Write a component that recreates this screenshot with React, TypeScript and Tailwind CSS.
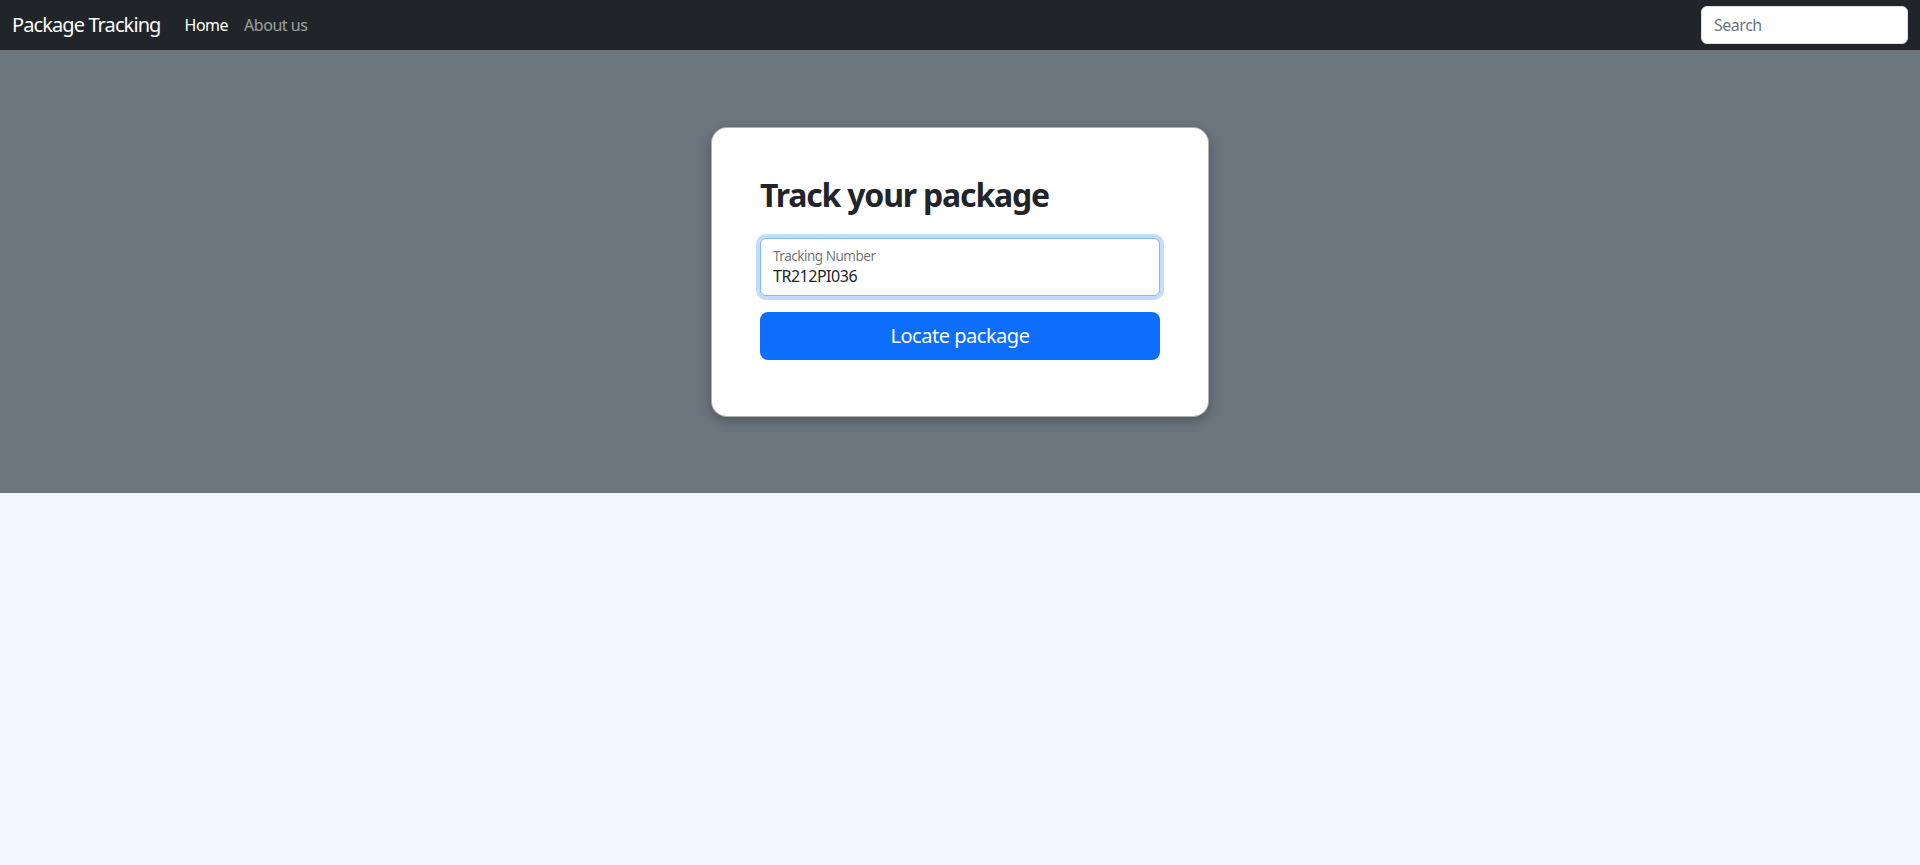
export default function App() {
    return (
        <div className="flex min-h-[865px] flex-col bg-[#eff6ff] font-['Segoe_UI','Noto_Sans',sans-serif] tracking-[-0.03em]">
            <nav className="flex h-[50px] items-center justify-between bg-[#212529] pl-3 pr-3">
                <div className="flex items-center">
                    <a className="mr-4 text-[20px] leading-[30px] tracking-[-0.045em] text-white">Package Tracking</a>
                    <a className="px-2 text-[16px] text-white">Home</a>
                    <a className="px-2 text-[16px] text-white/55">About us</a>
                </div>
                <input
                    className="h-[38px] w-[207px] rounded-md border border-[#dee2e6] bg-white px-3 text-[16px] text-[#212529] outline-none placeholder:text-[#6c757d]"
                    placeholder="Search"
                />
            </nav>
            <section className="flex h-[443px] items-center justify-center bg-[#6c757d]">
                <div className="w-[498px] rounded-2xl border border-black/30 bg-white px-12 pb-[56px] pt-12 shadow-[0_4px_12px_rgba(0,0,0,0.25)]">
                    <h2 className="mb-6 text-[32px] font-bold leading-[38px] tracking-[-0.037em] text-[#212529]">Track your package</h2>
                    <div className="mb-4 flex h-[58px] flex-col justify-center rounded-md border border-[#86b7fe] bg-white px-3 shadow-[0_0_0_4px_rgba(13,110,253,0.25)]">
                        <span className="text-[13.5px] leading-[18px] text-[#212529]/65">Tracking Number</span>
                        <span className="text-[16px] leading-[22px] text-[#212529]">TR212PI036</span>
                    </div>
                    <button className="h-[48px] w-full rounded-lg bg-[#0d6efd] text-[20px] text-white">Locate package</button>
                </div>
            </section>
            <div className="flex-1" />
        </div>
    );
}
